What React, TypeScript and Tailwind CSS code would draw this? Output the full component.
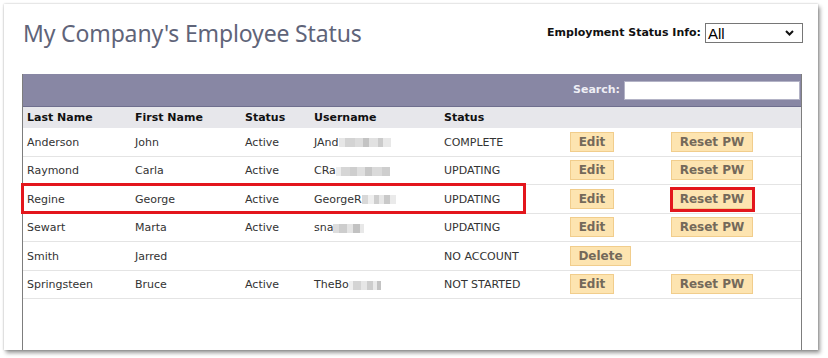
import React from "react";

type Seg = [number, string];

function Blur({ segs }: { segs: Seg[] }) {
  return (
    <span className="inline-flex h-[9px] items-stretch opacity-90">
      {segs.map(([w, c], i) => (
        <span key={i} style={{ width: w, background: c }} />
      ))}
    </span>
  );
}

type Row = {
  last: string;
  first: string;
  status: string;
  user: string;
  blur: Seg[];
  acct: string;
  kind: "edit" | "delete";
};

const rows: Row[] = [
  {
    last: "Anderson",
    first: "John",
    status: "Active",
    user: "JAnd",
    blur: [[6, "#e4e4e4"], [10, "#cfcfcf"], [8, "#d9d9d9"], [6, "#bdbdbd"], [9, "#dedede"], [5, "#c6c6c6"], [8, "#e6e6e6"]],
    acct: "COMPLETE",
    kind: "edit",
  },
  {
    last: "Raymond",
    first: "Carla",
    status: "Active",
    user: "CRa",
    blur: [[5, "#ececec"], [9, "#d2d2d2"], [7, "#c9c9c9"], [8, "#dcdcdc"], [7, "#c2c2c2"], [10, "#d6d6d6"], [8, "#c9c9c9"]],
    acct: "UPDATING",
    kind: "edit",
  },
  {
    last: "Regine",
    first: "George",
    status: "Active",
    user: "GeorgeR",
    blur: [[6, "#d4d4d4"], [6, "#eeeeee"], [5, "#c9c9c9"], [5, "#e5e5e5"], [6, "#c4c4c4"], [6, "#e8e8e8"]],
    acct: "UPDATING",
    kind: "edit",
  },
  {
    last: "Sewart",
    first: "Marta",
    status: "Active",
    user: "sna",
    blur: [[6, "#dadada"], [8, "#c8c8c8"], [6, "#e2e2e2"], [7, "#bcbcbc"], [4, "#e6e6e6"]],
    acct: "UPDATING",
    kind: "edit",
  },
  {
    last: "Smith",
    first: "Jarred",
    status: "",
    user: "",
    blur: [],
    acct: "NO ACCOUNT",
    kind: "delete",
  },
  {
    last: "Springsteen",
    first: "Bruce",
    status: "Active",
    user: "TheBo",
    blur: [[4, "#eeeeee"], [8, "#d0d0d0"], [6, "#e4e4e4"], [6, "#c8c8c8"], [4, "#e8e8e8"], [4, "#bdbdbd"]],
    acct: "NOT STARTED",
    kind: "edit",
  },
];

const btn =
  "h-[20px] flex items-center justify-center bg-[#fde4b0] border border-[#f1cd8c] text-[#74695a] font-bold text-[12px] leading-none";

export default function App() {
  return (
    <div
      className="w-[828px] h-[358px] bg-white pt-1 pl-1"
      style={{ fontFamily: '"DejaVu Sans", Verdana, sans-serif' }}
    >
      <div className="relative w-[814px] h-[346px] bg-white overflow-hidden shadow-[0_0_2px_rgba(0,0,0,0.25),2px_3px_4px_rgba(0,0,0,0.4)] pt-3 pl-[18px] pr-[16px] flex flex-col">
        {/* header */}
        <div className="h-[58px] flex justify-between items-start shrink-0">
          <h1
            className="text-[23px] leading-[34px] text-[#5f6479] font-normal tracking-[-0.15px] pl-[1px]"
            style={{ fontFamily: '"Noto Sans", sans-serif' }}
          >
            My Company's Employee Status
          </h1>
          <div className="mt-[7px] flex items-center gap-[4px] mr-[-1px]">
            <span className="text-[11px] font-bold text-[#111]">Employment Status Info:</span>
            <div className="w-[98px] h-[20px] border border-[#767676] bg-white flex items-center justify-between pl-[2px] pr-[8px]">
              <span
                className="text-[15px] text-black leading-none"
                style={{ fontFamily: '"Liberation Sans", Arial, sans-serif' }}
              >
                All
              </span>
              <svg width="9" height="6" viewBox="0 0 9 6">
                <path d="M1 1 L4.5 4.5 L8 1" fill="none" stroke="#111" strokeWidth="2" />
              </svg>
            </div>
          </div>
        </div>

        {/* table */}
        <div className="relative flex-1 border-x border-[#7d7d7d] text-[11px] text-[#333]">
          <div className="h-[33px] bg-[#8887a4] border-b border-[#6f6f8e] flex items-center justify-end gap-[4px] pr-[1px]">
            <span className="font-bold text-[#eeeef5]">Search:</span>
            <div className="w-[176px] h-[19px] bg-white border border-[#b3b3c6]" />
          </div>
          <div className="h-[21px] bg-[#e7e7eb] flex items-center font-bold text-[#111] pt-[1px]">
            <div className="w-[108px] pl-1">Last Name</div>
            <div className="w-[110px] pl-1">First Name</div>
            <div className="w-[69px] pl-1">Status</div>
            <div className="w-[130px] pl-1">Username</div>
            <div className="w-[126px] pl-1">Status</div>
          </div>
          {rows.map((r) => (
            <div
              key={r.last}
              className="h-[28.5px] flex items-center border-b border-[#e4e4e4]"
            >
              <div className="w-[108px] pl-1 pt-[2px]">{r.last}</div>
              <div className="w-[110px] pl-1 pt-[2px]">{r.first}</div>
              <div className="w-[69px] pl-1 pt-[2px]">{r.status}</div>
              <div className="w-[130px] pl-1 pt-[2px] flex items-center whitespace-nowrap">
                <span>{r.user}</span>
                {r.blur.length > 0 && <Blur segs={r.blur} />}
              </div>
              <div className="w-[126px] pl-1 pt-[2px]">{r.acct}</div>
              <div className="w-[101px] pl-1">
                {r.kind === "edit" ? (
                  <div className={`${btn} w-[44px]`}>Edit</div>
                ) : (
                  <div className={`${btn} w-[61px]`}>Delete</div>
                )}
              </div>
              <div className="pl-1">
                {r.kind === "edit" && <div className={`${btn} w-[82px]`}>Reset PW</div>}
              </div>
            </div>
          ))}

          {/* highlight overlays */}
          <div className="absolute left-[-2px] top-[109px] w-[505px] h-[31px] border-[3px] border-[#e3161c] pointer-events-none" />
          <div className="absolute left-[647px] top-[113px] w-[85px] h-[25px] border-[3px] border-[#e3161c] pointer-events-none" />
        </div>
      </div>
    </div>
  );
}
